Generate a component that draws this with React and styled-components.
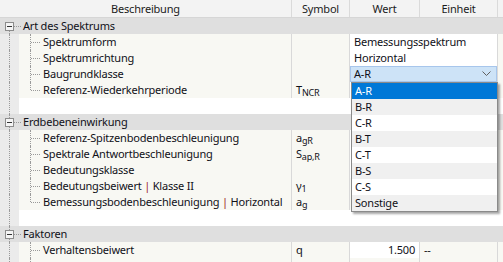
import React from "react";
import styled, { createGlobalStyle, css } from "styled-components";

const GlobalStyle = createGlobalStyle`
  html, body {
    margin: 0;
    padding: 0;
    background: #ffffff;
    overflow: hidden;
  }
  body {
    font-family: "Noto Sans", "Open Sans", sans-serif;
    font-size: 11px;
    letter-spacing: -0.2px;
    color: #101018;
  }
`;

const COLS = "19px 273px 58px 70px 78px 1fr";

const Table = styled.div`
  width: 503px;
  height: 262px;
  overflow: hidden;
  background: #ffffff;
`;

const HeaderRow = styled.div`
  display: grid;
  grid-template-columns: 292px 58px 70px 78px 1fr;
  height: 18px;
  background: #f3f3f3;
  border-bottom: 1px solid #d6d6d6;
  box-sizing: border-box;
`;

const HeaderCell = styled.div`
  display: flex;
  align-items: center;
  justify-content: center;
  border-right: 1px solid #dadada;
  line-height: 17px;
  color: #1b1b1b;
  &:last-child {
    border-right: none;
  }
`;

const Row = styled.div`
  display: grid;
  grid-template-columns: ${COLS};
  height: 16px;
  line-height: 16px;
  white-space: nowrap;
  background: ${(p) => (p.$group ? "#dfdfdf" : p.$empty ? "#ffffff" : "#f8f8f3")};
`;

const Gutter = styled.div`
  position: relative;
  background: ${(p) => (p.$group ? "#dfdfdf" : "#ebebeb")};
  &::before {
    content: "";
    position: absolute;
    left: 9px;
    top: ${(p) => (p.$first ? "9px" : "0")};
    bottom: 0;
    border-left: 1px dotted #9a9a9a;
  }
`;

const ToggleBox = styled.span`
  position: absolute;
  left: 5px;
  top: 4px;
  width: 9px;
  height: 9px;
  box-sizing: border-box;
  border: 1px solid #8c8c8c;
  background: #f4f4f4;
  z-index: 1;
  &::after {
    content: "";
    position: absolute;
    left: 1px;
    right: 1px;
    top: 3px;
    height: 1px;
    background: #333;
  }
`;

const GroupLabel = styled.div`
  grid-column: 2 / -1;
  position: relative;
  padding-left: 4px;
  &::before {
    content: "";
    position: absolute;
    left: -5px;
    width: 7px;
    top: 8px;
    border-top: 1px dotted #9a9a9a;
  }
`;

const NameCell = styled.div`
  position: relative;
  padding-left: 24px;
  border-right: 1px solid #d9d9d9;
  overflow: hidden;
  &::before {
    content: "";
    position: absolute;
    left: 11px;
    top: 0;
    height: ${(p) => (p.$last ? "8px" : "16px")};
    border-left: 1px dotted #9a9a9a;
  }
  &::after {
    content: "";
    position: absolute;
    left: 12px;
    width: 9px;
    top: 8px;
    border-top: 1px dotted #9a9a9a;
  }
`;

const Pipe = styled.span`
  color: #9a1c1c;
`;

const SymbolCell = styled.div`
  padding-left: 4px;
  border-right: 1px solid #d9d9d9;
  overflow: hidden;
`;

const Sub = styled.sub`
  font-size: 9px;
  vertical-align: -2px;
  line-height: 0;
`;

const ValueCell = styled.div`
  position: relative;
  grid-column: ${(p) => (p.$wide ? "span 2" : "auto")};
  background: ${(p) => (p.$white ? "#ffffff" : "transparent")};
  border-right: 1px solid #d9d9d9;
  padding: 0 4px;
  text-align: ${(p) => (p.$right ? "right" : "left")};
`;

const UnitCell = styled.div`
  padding-left: 4px;
  border-right: 1px solid #d9d9d9;
`;

const RestCell = styled.div``;

const Combo = styled.div`
  position: absolute;
  inset: 0 0 0 0;
  background: #cde3f7;
  border: 1px solid #a7c6ec;
  box-sizing: border-box;
  padding-left: 3px;
  line-height: 14px;
  display: flex;
  align-items: center;
  justify-content: space-between;
  z-index: 2;
`;

const Chevron = styled.svg`
  width: 9px;
  height: 6px;
  margin-right: 5px;
`;

const DropList = styled.div`
  position: absolute;
  top: 16px;
  left: 1px;
  width: 147px;
  background: #ffffff;
  border: 1px solid #8a8a8a;
  box-sizing: border-box;
  box-shadow: 2px 2px 2px rgba(0, 0, 0, 0.35);
  z-index: 3;
`;

const DropItem = styled.div`
  height: 16px;
  line-height: 16px;
  padding-left: 3px;
  ${(p) =>
    p.$selected
      ? css`
          background: #0078d7;
          color: #ffffff;
        `
      : css`
          background: ${p.$odd ? "#f0f0f0" : "#ffffff"};
          color: #101018;
        `}
`;

const classes = ["A-R", "B-R", "C-R", "B-T", "C-T", "B-S", "C-S", "Sonstige"];

function Group({ label, first }) {
  return (
    <Row $group>
      <Gutter $group $first={first}>
        <ToggleBox />
      </Gutter>
      <GroupLabel>{label}</GroupLabel>
    </Row>
  );
}

function Item({ name, symbol, value, unit, last, wide, white, right, children }) {
  return (
    <Row>
      <Gutter />
      <NameCell $last={last}>{name}</NameCell>
      <SymbolCell>{symbol}</SymbolCell>
      <ValueCell $wide={wide} $white={white} $right={right}>
        {children || value}
      </ValueCell>
      {!wide && <UnitCell>{unit}</UnitCell>}
      <RestCell />
    </Row>
  );
}

function Empty() {
  return (
    <Row $empty>
      <Gutter />
    </Row>
  );
}

export default function App() {
  return (
    <>
      <GlobalStyle />
      <Table>
        <HeaderRow>
          <HeaderCell>Beschreibung</HeaderCell>
          <HeaderCell>Symbol</HeaderCell>
          <HeaderCell>Wert</HeaderCell>
          <HeaderCell>Einheit</HeaderCell>
          <HeaderCell />
        </HeaderRow>

        <Group label="Art des Spektrums" first />
        <Item name="Spektrumform" value="Bemessungsspektrum" wide white />
        <Item name="Spektrumrichtung" value="Horizontal" wide white />
        <Item name="Baugrundklasse" wide white>
          <Combo>
            A-R
            <Chevron viewBox="0 0 9 6">
              <path d="M0.5 0.5 L4.5 4.5 L8.5 0.5" fill="none" stroke="#606060" strokeWidth="1" />
            </Chevron>
          </Combo>
          <DropList>
            {classes.map((c, i) => (
              <DropItem key={c} $selected={i === 0} $odd={i % 2 === 1}>
                {c}
              </DropItem>
            ))}
          </DropList>
        </Item>
        <Item
          name="Referenz-Wiederkehrperiode"
          symbol={<>T<Sub>NCR</Sub></>}
          value="475"
          unit="[a]"
          last
          white
          right
        />
        <Empty />

        <Group label="Erdbebeneinwirkung" />
        <Item
          name="Referenz-Spitzenbodenbeschleunigung"
          symbol={<>a<Sub>gR</Sub></>}
          white
        />
        <Item
          name="Spektrale Antwortbeschleunigung"
          symbol={<>S<Sub>ap,R</Sub></>}
          white
        />
        <Item name="Bedeutungsklasse" wide white />
        <Item
          name={<>Bedeutungsbeiwert <Pipe>|</Pipe> Klasse II</>}
          symbol={<>γ<Sub>1</Sub></>}
        />
        <Item
          name={<>Bemessungsbodenbeschleunigung <Pipe>|</Pipe> Horizontal</>}
          symbol={<>a<Sub>g</Sub></>}
          last
        />
        <Empty />

        <Group label="Faktoren" />
        <Item name="Verhaltensbeiwert" symbol="q" value="1.500" unit="--" white right />
        <Item name="" />
      </Table>
    </>
  );
}
